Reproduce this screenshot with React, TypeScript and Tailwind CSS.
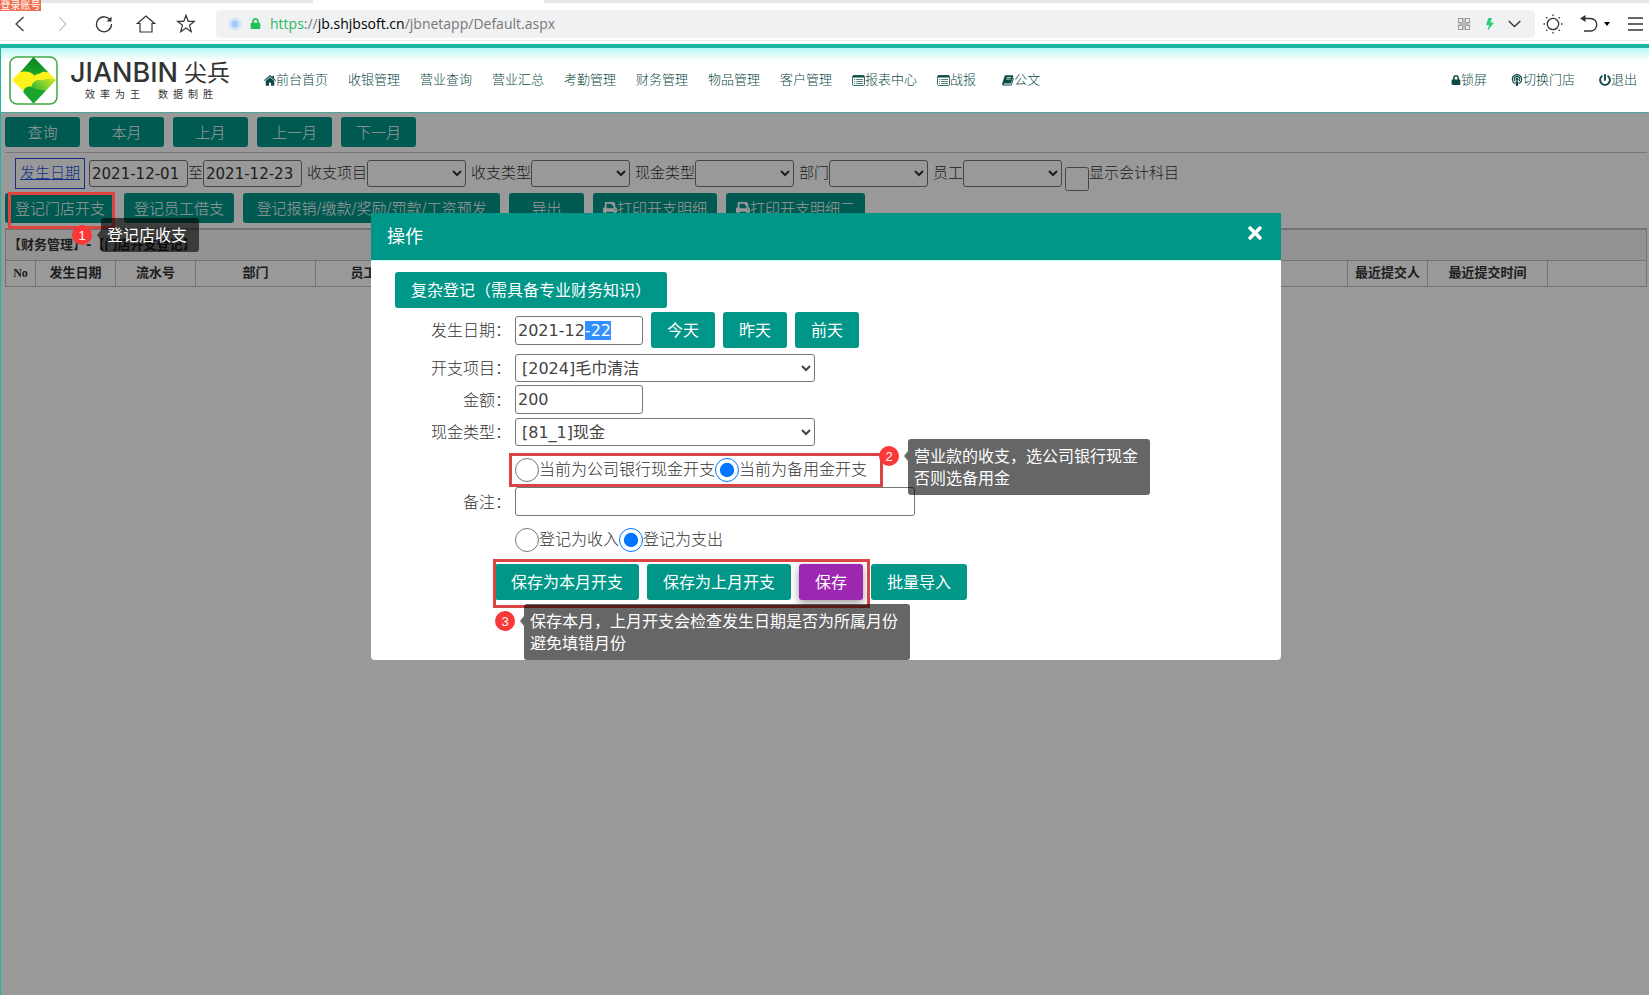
import React, { useEffect, useRef, useState } from "react";
import { FaLock, FaPodcast, FaPowerOff, FaPrint, FaTimes } from "react-icons/fa";
import { BsLightningFill } from "react-icons/bs";

const HomeIcon = () => (
  <svg width="12" height="11" viewBox="0 0 12 11" fill="currentColor">
    <path d="M6 0 0 5.2l.7.8L6 1.5 11.300 6l.7-.8-2-1.700V.8H8.500v1.300z" />
    <path d="M6 2.300 1.700 6v4.200c0 .3.2.5.5.5H5V7.700h2v3h2.800c.3 0 .5-.2.5-.5V6z" />
  </svg>
);
const ListIcon = () => (
  <svg width="13" height="11" viewBox="0 0 13 11" fill="none" stroke="currentColor">
    <rect x="0.500" y="0.500" width="12" height="10" rx="1" strokeWidth="0.800" />
    <path d="M1 1.500h11" strokeWidth="2" />
    <path d="M2 4.500h1.200M4.200 4.500H11M2 6.500h1.200M4.200 6.500H11M2 8.500h1.200M4.200 8.500H11" strokeWidth="0.700" />
  </svg>
);
const BookIcon = () => (
  <svg width="12" height="11" viewBox="0 0 12 11">
    <path d="M4 .3h6.300c.8 0 1.100.5.9 1.100L9.300 7.600c-.2.5-.6.8-1.200.8H2.200c-.8 0-.8 1 0 1h6.200c.5 0 .8-.2 1-.7l1.800-6c.5.2.7.6.5 1.200L10 9.600c-.2.6-.7 1-1.300 1H2C.6 10.600-.2 9.400.3 8.200L2.500 1.400C2.700.7 3.300.3 4 .3z" fill="currentColor" />
    <path d="M4.700 2.500h4.500M4.200 4.200h4.500" stroke="#fff" strokeWidth="0.700" />
  </svg>
);
const Logo = () => (
  <svg width="49" height="49" viewBox="0 0 49 49">
    <defs>
      <linearGradient id="peak" x1="0" y1="0" x2="0" y2="1">
        <stop offset="0" stopColor="#0b7f1e" />
        <stop offset="1" stopColor="#19a82c" />
      </linearGradient>
      <linearGradient id="hill" x1="1" y1="0" x2="0.3" y2="0.6">
        <stop offset="0" stopColor="#d3e82a" />
        <stop offset="0.500" stopColor="#7fd02c" />
        <stop offset="1" stopColor="#1fae32" />
      </linearGradient>
    </defs>
    <rect x="1" y="1" width="47" height="47" rx="7" fill="#fff" stroke="#3fa93f" strokeWidth="1.500" />
    <path d="M12.500 14 3 24l12 11.500L35 34l12-10-8.500-8.500L24.500 14z" fill="#fdf21a" />
    <path d="M24.500 1 39.500 16.500c-3.500-1.300-6.500-.8-8.800 1.200-2 0-3.500.5-5.200 2-3-4-8.500-4.800-14-3.700z" fill="url(#peak)" />
    <path d="M24.500 47.500 14.500 36c.5-4.500 4-6 8-5.500 1-5 5.500-7.500 10.500-6 4-2.200 9-2.500 14-.5z" fill="url(#hill)" />
    <path d="M24.500 47.500 14.500 36.500c.4-4.300 4-5.800 8.500-5 4 3 10 2 13.500 3.500z" fill="#18a42e" />
  </svg>
);

const navItems = [
  { text: "前台首页", icon: <HomeIcon /> },
  { text: "收银管理" },
  { text: "营业查询" },
  { text: "营业汇总" },
  { text: "考勤管理" },
  { text: "财务管理" },
  { text: "物品管理" },
  { text: "客户管理" },
  { text: "报表中心", icon: <ListIcon /> },
  { text: "战报", icon: <ListIcon /> },
];
const rangeButtons = ["查询", "本月", "上月", "上一月", "下一月"];
const filterSelects = ["收支项目", "收支类型", "现金类型", "部门", "员工"];

const BrowserBar = () => (
  <div className="bg-white">
    <div className="flex h-[3px] bg-[#e4e6ea]">
      <div className="ml-[19%] w-[14%] bg-white" />
    </div>
    <div className="absolute left-0 top-0 flex h-[11px] w-[41px] items-center justify-center bg-[#ef6f4f]">
      <span className="whitespace-nowrap text-[10px] leading-[11px] text-white">登录账号</span>
    </div>
    <div className="flex h-[38px] items-center border-b border-[#e8eaec] pt-1 text-[#333]">
      <button aria-label="后退" className="ml-3.5 w-3">
        <svg width="12" height="16" viewBox="0 0 12 16" fill="none" stroke="currentColor" strokeWidth="1.200"><path d="M9.500 1 2 8l7.500 7" /></svg>
      </button>
      <button aria-label="前进" className="ml-8 w-3 text-[#c4c4c4]">
        <svg width="12" height="16" viewBox="0 0 12 16" fill="none" stroke="currentColor" strokeWidth="1.200"><path d="m1 1 7 7-7 7" /></svg>
      </button>
      <button aria-label="刷新" className="ml-[25px] w-[18px]">
        <svg width="18" height="18" viewBox="0 0 18 18" fill="none" stroke="currentColor" strokeWidth="1.300"><path d="M15.500 5.500A7.500 7.500 0 1 0 16.500 9" /><path d="M16.500 1.500v5h-5z" fill="currentColor" stroke="none" /></svg>
      </button>
      <button aria-label="主页" className="ml-[23px] w-5">
        <svg width="20" height="18" viewBox="0 0 20 18" fill="none" stroke="currentColor" strokeWidth="1.200"><path d="M4 8.500H1.300L10 1l8.700 7.500H16V17H4z" /></svg>
      </button>
      <button aria-label="收藏" className="ml-5 w-5">
        <svg width="20" height="19" viewBox="0 0 20 19" fill="none" stroke="currentColor" strokeWidth="1.200"><path d="m10 1.300 2.200 6h6.300l-5 4 1.800 6.400L10 14l-5.300 3.700 1.800-6.400-5-4h6.300z" /></svg>
      </button>
      <div className="ml-5 flex h-7 flex-1 items-center rounded bg-[#f0f1f2] pl-3">
        <svg width="14" height="14" viewBox="0 0 14 14"><circle cx="7" cy="7" r="6.500" fill="#d3e4fb" /><circle cx="7" cy="7" r="3.500" fill="#a5caf9" /></svg>
        <FaLock className="ml-2 size-[11px] text-[#1fbf5c]" />
        <span className="ml-[9px] flex-1 font-['Open_Sans',sans-serif] text-sm leading-5 text-[#777]">
          <span className="text-[#2db866]">https</span>://<span className="text-black">jb.shjbsoft.cn</span>/jbnetapp/Default.aspx
        </span>
        <svg width="12" height="12" viewBox="0 0 12 12" fill="none" stroke="#8a8a8a"><path d="M.5.500h4v4h-4zM7.500.500h4v4h-4zM.5 7.500h4v4h-4zM7.500 7.500h4v4h-4zM0 6h12M6 0v12" strokeWidth="0.900" /></svg>
        <BsLightningFill className="ml-[14px] size-3 text-[#2ecc7a]" />
        <svg className="ml-3 mr-[14px]" width="13" height="8" viewBox="0 0 13 8" fill="none" stroke="currentColor" strokeWidth="1.400"><path d="m.7 1 5.800 5.500L12.300 1" /></svg>
      </div>
      <button aria-label="主题" className="ml-2">
        <svg width="20" height="20" viewBox="0 0 20 20" fill="none" stroke="currentColor" strokeWidth="1.300"><circle cx="10" cy="10" r="5.700" /><path d="M10 .5V2M10 18v1.500M.5 10H2M18 10h1.500M3.300 3.300l1 1M15.700 15.700l1 1M3.300 16.700l1-1M15.700 4.300l1-1" /></svg>
      </button>
      <button aria-label="撤销" className="ml-[17px] flex items-center gap-1.5">
        <svg width="18" height="17" viewBox="0 0 18 17" fill="none" stroke="currentColor" strokeWidth="1.300"><path d="M3 3.500h7.500a6 6 0 0 1 0 12.500H4" /><path d="M0 3.500 5.500 0v7z" fill="currentColor" stroke="none" /></svg>
        <svg width="6" height="4" viewBox="0 0 6 4"><path d="M0 0h6L3 4z" /></svg>
      </button>
      <button aria-label="菜单" className="ml-[18px] mr-1.5">
        <svg width="15" height="14" viewBox="0 0 15 14" stroke="currentColor" strokeWidth="1.300"><path d="M0 1h15M0 7h15M0 13h15" /></svg>
      </button>
    </div>
  </div>
);

const Header = () => (
  <header className="flex h-[69px] items-center border-b border-[#4aa79b] border-t-4 border-t-[#1cb5a3] bg-linear-to-b from-[#b4f6f2] to-white to-20% text-[13px] text-[#0b4a46]">
    <div className="flex items-center pl-2">
      <Logo />
      <div className="ml-3 pt-0.5 text-[#333]">
        <div className="flex items-center gap-1.5 whitespace-nowrap leading-7">
          <span className="font-['Inter',sans-serif] text-[27px] font-medium">JIANBIN</span>
          <span className="text-[23px]">尖兵</span>
        </div>
        <div className="flex gap-[18px] pl-[15px] text-[10px] leading-4">
          <span className="flex gap-[5px]"><span>效</span><span>率</span><span>为</span><span>王</span></span>
          <span className="flex gap-[5px]"><span>数</span><span>据</span><span>制</span><span>胜</span></span>
        </div>
      </div>
    </div>
    <nav className="ml-[34px] flex flex-1 items-center gap-5 whitespace-nowrap font-light">
      {navItems.map((item) => (
        <a href="#" key={item.text} className="flex items-center">
          {item.icon}
          {item.text}
        </a>
      ))}
      <a href="#" className="ml-1.5 flex items-center"><BookIcon />公文</a>
    </nav>
    <div className="flex items-center gap-6 whitespace-nowrap pr-3 font-light">
      <a href="#" className="flex items-center"><FaLock className="size-[10px]" />锁屏</a>
      <a href="#" className="flex items-center"><FaPodcast className="size-3" />切换门店</a>
      <a href="#" className="flex items-center"><FaPowerOff className="size-3" />退出</a>
    </div>
  </header>
);

const PageButton = ({ children, className = "min-w-[75px]" }: { children: React.ReactNode; className?: string }) => (
  <button className={`flex h-[30px] items-center justify-center rounded-[3px] bg-[#009688] px-[10px] pt-0.5 text-[15px] text-white ${className}`}>
    {children}
  </button>
);

const DialogButton = ({ children }: { children: React.ReactNode }) => (
  <button type="button" className="h-9 rounded-[3px] bg-[#009688] px-4 pt-0.5 font-normal text-white">{children}</button>
);

const Badge = ({ num }: { num: number }) => (
  <span className="flex size-5 shrink-0 items-center justify-center rounded-full bg-[#fb3838] font-['Liberation_Sans',sans-serif] text-[13px] leading-none text-white">{num}</span>
);

const Tip = ({ children, className }: { children: React.ReactNode; className: string }) => (
  <div className={`relative rounded-[3px] bg-black/60 px-[6px] pb-[5px] pt-[7px] font-normal leading-[22px] text-white ${className}`}>
    <svg className="absolute -left-1 top-3" width="4" height="10" viewBox="0 0 4 10"><path d="M4 0v10L0 5z" fill="#000" fillOpacity="0.600" /></svg>
    {children}
  </div>
);

const ListPage = () => (
  <div className="pl-1 pr-0.5 pt-1 text-[15px] font-light text-[#333]">
    <div className="flex gap-[9px] border-b border-[#c8c8c8] pb-[5px]">
      {rangeButtons.map((text) => <PageButton key={text}>{text}</PageButton>)}
    </div>
    <div className="flex h-10 items-center whitespace-nowrap pl-[10px] pt-px">
      <a href="#" className="border border-[#1e50e0] px-1 py-[3px] leading-[23px] text-[#1e50e0] underline">发生日期</a>
      <input aria-label="开始日期" defaultValue="2021-12-01" className="ml-1 h-[27px] w-[99px] rounded-[3px] border border-[#767676] bg-white px-0.5 font-normal" />
      <span>至</span>
      <input aria-label="结束日期" defaultValue="2021-12-23" className="h-[27px] w-[99px] rounded-[3px] border border-[#767676] bg-white px-0.5 font-normal" />
      {filterSelects.map((text) => (
        <label key={text} className="ml-[5px] flex items-center">
          {text}
          <select className="h-[27px] w-[99px] rounded-[3px] border border-[#767676] bg-white"><option></option></select>
        </label>
      ))}
      <label className="ml-[3px] flex items-center">
        <input type="checkbox" className="mt-2.5 size-6" />
        显示会计科目
      </label>
    </div>
    <div className="flex gap-[9px] whitespace-nowrap">
      <PageButton>登记门店开支</PageButton>
      <PageButton>登记员工借支</PageButton>
      <PageButton className="min-w-[257px]">登记报销/缴款/奖励/罚款/工资预发</PageButton>
      <PageButton>导出</PageButton>
      <PageButton><FaPrint className="size-[14px]" />打印开支明细</PageButton>
      <PageButton><FaPrint className="size-[14px]" />打印开支明细二</PageButton>
    </div>
    <table className="mt-[5px] w-full table-fixed border-collapse border border-t-2 border-[#c0c0c0] text-[13px]">
      <colgroup>
        <col className="w-[30px]" />
        <col className="w-20" />
        <col className="w-20" />
        <col className="w-[120px]" />
        <col className="w-24" />
        <col />
        <col className="w-20" />
        <col className="w-[120px]" />
        <col className="w-[99px]" />
      </colgroup>
      <thead>
        <tr className="h-[31px] bg-[#f5f5f5]">
          <th colSpan={9} className="px-0.5 text-left">【财务管理】-【门店开支登记】</th>
        </tr>
        <tr className="h-[26px] [&>th]:border [&>th]:border-[#c0c0c0]">
          <th className="font-['Liberation_Serif',serif] text-xs">No</th>
          <th>发生日期</th>
          <th>流水号</th>
          <th>部门</th>
          <th>员工</th>
          <th></th>
          <th>最近提交人</th>
          <th>最近提交时间</th>
          <th></th>
        </tr>
      </thead>
    </table>
  </div>
);

const ExpenseDialog = () => {
  const [date, setDate] = useState("2021-12-22");
  const [amount, setAmount] = useState("200");
  const dateRef = useRef<HTMLInputElement>(null);

  useEffect(() => {
    dateRef.current?.focus();
    dateRef.current?.setSelectionRange(7, 10);
  }, []);

  return (
    <div role="dialog" aria-label="操作" className="w-[910px] rounded-b bg-white text-base font-light text-[#333]">
      <div className="flex h-[47px] items-center justify-between bg-[#009688] px-4 text-lg font-normal text-white">
        <span>操作</span>
        <button aria-label="关闭" className="mb-2"><FaTimes className="size-5" /></button>
      </div>
      <form className="flex flex-col items-start border-t border-[#c9fbf8] pb-[60px] pl-6 pt-[11px]" onSubmit={(e) => e.preventDefault()}>
        <DialogButton>复杂登记（需具备专业财务知识）</DialogButton>
        <div className="mt-1 flex items-center gap-2">
          <div className="flex items-center gap-1">
            <label htmlFor="date" className="w-[116px] pt-0.5 text-right">发生日期：</label>
            <input
              id="date"
              ref={dateRef}
              value={date}
              onChange={(e) => setDate(e.target.value)}
              className="h-[29px] w-32 rounded-[3px] border border-[#767676] px-0.5 font-normal text-[#444] outline-none selection:bg-[#3390ff] selection:text-white"
            />
          </div>
          <DialogButton>今天</DialogButton>
          <DialogButton>昨天</DialogButton>
          <DialogButton>前天</DialogButton>
        </div>
        <div className="mt-1.5 flex items-center gap-1">
          <label htmlFor="item" className="w-[116px] pt-0.5 text-right">开支项目：</label>
          <select id="item" className="h-7 w-[300px] rounded-[3px] border border-[#767676] px-0.5 font-normal text-[#444]"><option>[2024]毛巾清洁</option></select>
        </div>
        <div className="mt-[3px] flex items-center gap-1">
          <label htmlFor="amount" className="w-[116px] pt-0.5 text-right">金额：</label>
          <input id="amount" value={amount} onChange={(e) => setAmount(e.target.value)} className="h-[29px] w-32 rounded-[3px] border border-[#767676] px-0.5 font-normal text-[#444]" />
        </div>
        <div className="mt-1 flex items-center gap-1">
          <label htmlFor="cash" className="w-[116px] pt-0.5 text-right">现金类型：</label>
          <select id="cash" className="h-7 w-[300px] rounded-[3px] border border-[#767676] px-0.5 font-normal text-[#444]"><option>[81_1]现金</option></select>
        </div>
        <div className="relative ml-[114px] mt-[7px] flex h-[34px] items-center border-3 border-[#d94444] pl-[3px] pr-[13px]">
          <label className="flex items-center"><input type="radio" name="fund" className="size-6" />当前为公司银行现金开支</label>
          <label className="flex items-center"><input type="radio" name="fund" defaultChecked className="size-6" />当前为备用金开支</label>
          <div className="absolute -top-[17px] left-full z-10 -ml-px flex items-start gap-[9px]">
            <div className="pt-[7px]"><Badge num={2} /></div>
            <Tip className="w-[242px]">营业款的收支，选公司银行现金<br />否则选备用金</Tip>
          </div>
        </div>
        <div className="flex items-center gap-1">
          <label htmlFor="remark" className="w-[116px] pt-0.5 text-right">备注：</label>
          <input id="remark" className="h-[29px] w-[400px] rounded-[3px] border border-[#767676] px-0.5" />
        </div>
        <div className="ml-[120px] mt-3 flex items-center">
          <label className="flex items-center"><input type="radio" name="kind" className="size-6" />登记为收入</label>
          <label className="flex items-center"><input type="radio" name="kind" defaultChecked className="size-6" />登记为支出</label>
        </div>
        <div className="relative ml-[100px] mt-3 flex gap-2">
          <DialogButton>保存为本月开支</DialogButton>
          <DialogButton>保存为上月开支</DialogButton>
          <button type="submit" className="h-9 rounded-[3px] bg-[#9c27b0] px-4 pt-0.5 font-normal text-white shadow-[0_3px_8px_rgba(0,0,0,0.4)]">保存</button>
          <DialogButton>批量导入</DialogButton>
          <div className="pointer-events-none absolute -bottom-2 -left-0.5 -top-[5px] right-[97px] border-3 border-[#d94444]" />
          <div className="absolute left-0 top-10 flex items-start gap-[9px]">
            <div className="pt-[7px]"><Badge num={3} /></div>
            <Tip className="w-[386px]">保存本月，上月开支会检查发生日期是否为所属月份<br />避免填错月份</Tip>
          </div>
        </div>
      </form>
    </div>
  );
};

const App = () => {
  return (
    <div className="flex min-h-screen flex-col bg-white font-['DejaVu_Sans','Noto_Sans_CJK_SC',sans-serif]">
      <BrowserBar />
      <div className="mt-[3px] flex flex-1 flex-col border-l border-[#1cb5a3]">
        <Header />
        <main className="relative flex-1">
          <ListPage />
          <div className="absolute inset-0 bg-black/40" />
          <div className="absolute left-[7px] top-[79px] h-[37px] w-[107px] border-3 border-[#e0443e]" />
          <div className="absolute left-[71px] top-[105px] flex items-start gap-[9px]">
            <div className="pt-[7px]"><Badge num={1} /></div>
            <Tip className="w-[98px] whitespace-nowrap">登记店收支</Tip>
          </div>
          <div className="absolute inset-x-0 top-[100px] flex justify-center pl-0.5">
            <ExpenseDialog />
          </div>
        </main>
      </div>
    </div>
  );
};
export default App;
